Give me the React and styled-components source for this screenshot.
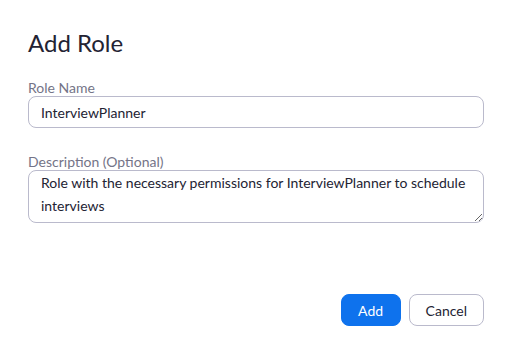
import styled, { createGlobalStyle } from 'styled-components'

const Global = createGlobalStyle`
  html, body {
    margin: 0;
    background: #ffffff;
  }
  body {
    font-family: Lato, "Open Sans", sans-serif;
    color: #232333;
  }
`

const Dialog = styled.form`
  width: 513px;
  box-sizing: border-box;
  padding: 27px 29px 0 28px;
  display: flex;
  flex-direction: column;
`

const Title = styled.h2`
  margin: 0;
  font-size: 24px;
  line-height: 32px;
  font-weight: 400;
  color: #232333;
`

const Field = styled.label`
  display: flex;
  flex-direction: column;
  margin-top: ${p => p.$gap}px;
`

const Label = styled.span`
  font-size: 14px;
  line-height: 16px;
  color: #747487;
`

const TextInput = styled.input`
  box-sizing: border-box;
  height: 32px;
  margin: 0;
  padding: 0 12px;
  border: 1px solid #babacc;
  border-radius: 8px;
  font-family: inherit;
  font-size: 14px;
  color: #232333;
  outline: none;
`

const TextArea = styled.textarea`
  box-sizing: border-box;
  height: 53px;
  margin: 0;
  padding: 0 12px;
  border: 1px solid #babacc;
  border-radius: 8px;
  font-family: inherit;
  font-size: 14px;
  line-height: 23px;
  color: #232333;
  outline: none;
  resize: vertical;
`

const Footer = styled.div`
  display: flex;
  justify-content: flex-end;
  gap: 8px;
  margin-top: 71px;
`

const Button = styled.button`
  box-sizing: border-box;
  height: 32px;
  min-width: ${p => p.$width}px;
  padding: 0 16px;
  border-radius: 8px;
  font-family: inherit;
  font-size: 14px;
  cursor: pointer;
  border: 1px solid ${p => (p.$primary ? '#0e72ed' : '#babacc')};
  background: ${p => (p.$primary ? '#0e72ed' : '#ffffff')};
  color: ${p => (p.$primary ? '#ffffff' : '#232333')};
`

export default function App() {
  return (
    <>
      <Global />
      <Dialog onSubmit={e => e.preventDefault()}>
        <Title>Add Role</Title>
        <Field $gap={21}>
          <Label>Role Name</Label>
          <TextInput defaultValue="InterviewPlanner" />
        </Field>
        <Field $gap={26}>
          <Label>Description (Optional)</Label>
          <TextArea defaultValue="Role with the necessary permissions for InterviewPlanner to schedule interviews" />
        </Field>
        <Footer>
          <Button type="submit" $primary $width={60}>Add</Button>
          <Button type="button" $width={75}>Cancel</Button>
        </Footer>
      </Dialog>
    </>
  )
}
